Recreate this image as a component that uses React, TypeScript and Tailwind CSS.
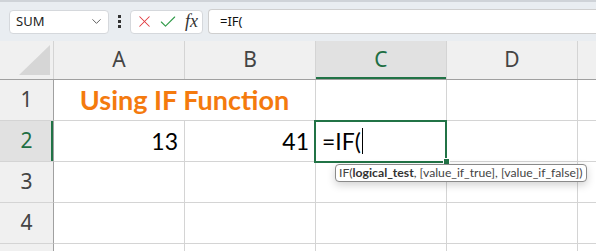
import { ChevronDown, X, Check } from "lucide-react";

const cellFont = { fontFamily: "Lato, 'Liberation Sans', sans-serif" };

function ColHeader({ label, active }: { label: string; active?: boolean }) {
  return (
    <div
      className={
        "flex w-[131px] shrink-0 items-center justify-center border-r border-[#d4d4d4] text-[21px] " +
        (active
          ? "bg-[#e1e1e1] text-[#1e6e43] shadow-[inset_0_-2px_0_#217346]"
          : "text-[#444]")
      }
    >
      {label}
    </div>
  );
}

function RowHeader({ n, active }: { n?: number; active?: boolean }) {
  return (
    <div
      className={
        "flex w-[54px] shrink-0 items-center justify-center border-r border-b border-r-[#a0a0a0] border-b-[#d4d4d4] text-[21px] " +
        (active
          ? "bg-[#e1e1e1] text-[#1e6e43] shadow-[inset_-2px_0_0_#217346]"
          : "bg-[#f0f0f0] text-[#444]")
      }
    >
      {n}
    </div>
  );
}

function Cell({ children, className = "" }: { children?: React.ReactNode; className?: string }) {
  return (
    <div
      className={
        "flex w-[131px] shrink-0 items-center border-r border-b border-[#d4d4d4] bg-white px-[6px] text-[23px] text-black " +
        className
      }
      style={cellFont}
    >
      {children}
    </div>
  );
}

export default function App() {
  return (
    <div
      className="relative h-[251px] w-[596px] overflow-hidden bg-[#f0f0f0]"
      style={{ fontFamily: "'Noto Sans', 'Open Sans', sans-serif" }}
    >
      {/* formula bar */}
      <div className="flex h-[41px] items-center border-t-2 border-[#cfd3d8] bg-[#e9edf1] pl-[9px]">
        <div className="flex h-[24px] w-[100px] items-center justify-between rounded-[4px] border border-[#d5d8dc] bg-white pl-[6px] pr-[4px] text-[13px] text-[#222]">
          <span>SUM</span>
          <ChevronDown size={15} strokeWidth={1.5} className="text-[#555]" />
        </div>
        <div className="mx-[9px] flex flex-col gap-[2px]">
          <span className="block h-[3px] w-[3px] bg-[#333]" />
          <span className="block h-[3px] w-[3px] bg-[#333]" />
          <span className="block h-[3px] w-[3px] bg-[#333]" />
        </div>
        <div className="flex h-[24px] w-[73px] items-center gap-[4px] rounded-[4px] border border-[#d5d8dc] bg-white pl-[4px]">
          <X size={19} strokeWidth={1.3} className="text-[#e0383e]" />
          <Check size={20} strokeWidth={1.3} className="text-[#2f9a48]" />
          <span
            className="ml-[3px] text-[18px] italic text-[#333]"
            style={{ fontFamily: "'Liberation Serif', serif" }}
          >
            fx
          </span>
        </div>
        <div className="ml-[5px] flex h-[25px] flex-1 items-center border-y border-l border-[#cfcfcf] rounded-l-[4px] bg-white pl-[11px] text-[13px] text-[#111]">
          =IF(
        </div>
      </div>

      {/* column headers */}
      <div className="flex h-[39px] border-b border-[#a0a0a0]">
        <div className="relative w-[54px] shrink-0 border-r border-[#d4d4d4]">
          <svg className="absolute left-[19px] top-[4px]" width="32" height="31" viewBox="0 0 32 31">
            <polygon points="31,0 31,30 0,30" fill="#d6d6d6" />
          </svg>
        </div>
        <ColHeader label="A" />
        <ColHeader label="B" />
        <ColHeader label="C" active />
        <ColHeader label="D" />
        <div className="flex-1" />
      </div>

      {/* row 1 */}
      <div className="flex h-[41px]">
        <RowHeader n={1} />
        <div
          className="flex w-[262px] shrink-0 items-center justify-center border-r border-b border-[#d4d4d4] bg-white text-[27px] font-bold text-[#f47a0e]"
          style={cellFont}
        >
          Using IF Function
        </div>
        <Cell />
        <Cell />
        <div className="flex-1 border-b border-[#d4d4d4] bg-white" />
      </div>

      {/* row 2 */}
      <div className="flex h-[41px]">
        <RowHeader n={2} active />
        <Cell className="justify-end">13</Cell>
        <Cell className="justify-end">41</Cell>
        <Cell className="relative">
          <div className="absolute -top-px -left-[2px] h-[43px] w-[133px] border-2 border-[#217346]" />
          <div className="absolute -bottom-[3px] right-[-3px] h-[5px] w-[5px] bg-[#217346] outline outline-1 outline-white" />
          <span>=IF(</span>
          <span className="ml-[1px] inline-block h-[26px] w-px bg-black" />
        </Cell>
        <Cell />
        <div className="flex-1 border-b border-[#d4d4d4] bg-white" />
      </div>

      {/* rows 3-4 */}
      {[3, 4].map((n) => (
        <div key={n} className="flex h-[41px]">
          <RowHeader n={n} />
          <Cell />
          <Cell />
          <Cell />
          <Cell />
          <div className="flex-1 border-b border-[#d4d4d4] bg-white" />
        </div>
      ))}

      {/* partial row 5 */}
      <div className="flex h-[41px]">
        <RowHeader />
        <Cell />
        <Cell />
        <Cell />
        <Cell />
        <div className="flex-1 border-b border-[#d4d4d4] bg-white" />
      </div>

      {/* function tooltip */}
      <div
        className="absolute left-[335px] top-[164px] flex h-[18px] items-center whitespace-nowrap rounded-[4px] border border-[#8a8a8a] bg-white px-[3px] text-[12.2px] text-[#444] shadow-[0_3px_8px_rgba(0,0,0,0.18)]"
        style={cellFont}
      >
        IF(<b className="text-[#333]">logical_test</b>, [value_if_true], [value_if_false])
      </div>
    </div>
  );
}
